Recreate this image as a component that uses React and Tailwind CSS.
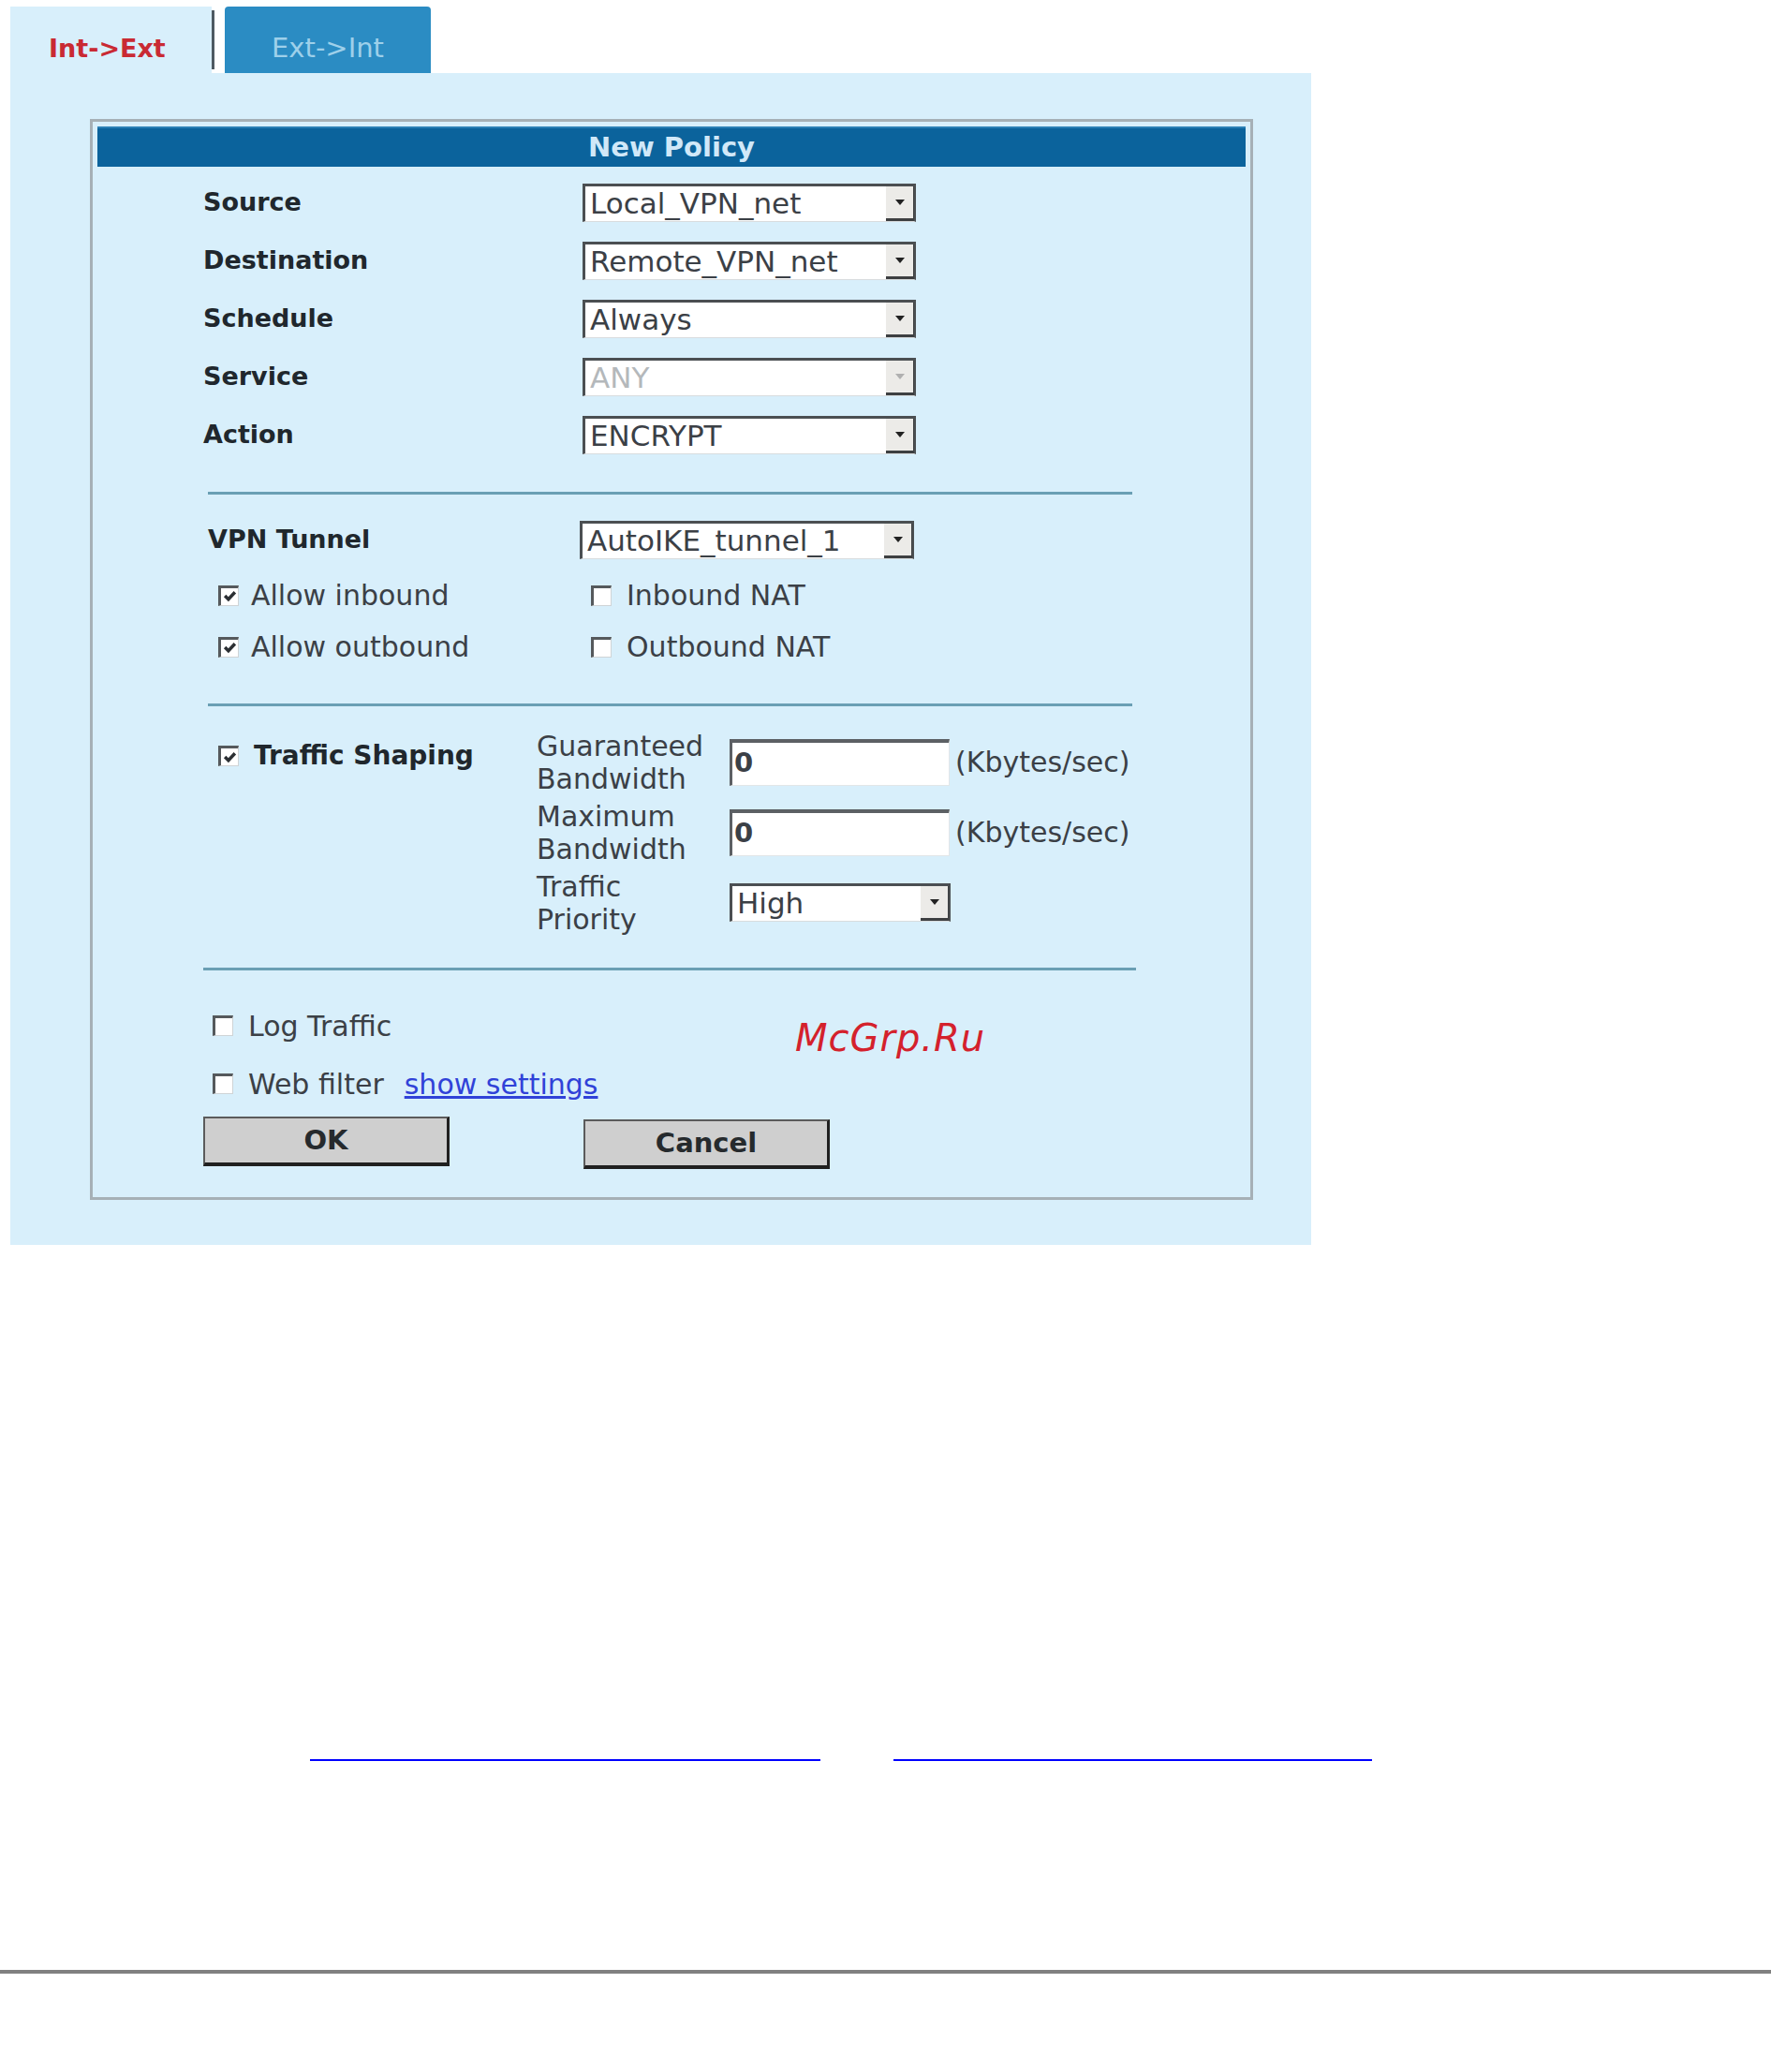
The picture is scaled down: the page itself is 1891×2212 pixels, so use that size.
import React from 'react'

const font = { fontFamily: '"DejaVu Sans", Verdana, sans-serif' }

const Check = ({ on }) => (
  <span className="inline-flex w-[22px] h-[22px] shrink-0 bg-white border-t-[3px] border-l-[3px] border-t-[#55595c] border-l-[#55595c] border-r border-b border-r-[#cfd4d6] border-b-[#cfd4d6] items-center justify-center">
    {on && (
      <svg width="15" height="15" viewBox="0 0 14 14">
        <path d="M2 6.5 L5.5 10 L12 3" fill="none" stroke="#2b2f33" strokeWidth="3.2" />
      </svg>
    )}
  </span>
)

const Dropdown = ({ value, width = 'w-[356px]', disabled }) => (
  <div className={`${width} h-[41px] flex bg-white border-t-[3px] border-l-[3px] border-r-2 border-b border-t-[#4b4f52] border-l-[#4b4f52] border-r-[#4b4f52] border-b-[#d8dcde]`}>
    <span className={`flex-1 flex items-center pl-[5px] text-[31px] leading-none ${disabled ? 'text-[#b4b8bb]' : 'text-[#3b4046]'}`}>
      {value}
    </span>
    <span className="w-[30px] flex items-center justify-center bg-[#ecebe8] border-b-[3px] border-r border-[#3d3f41]">
      <svg width="10" height="6" viewBox="0 0 10 6">
        <path d="M0 0 H10 L5 6 Z" fill={disabled ? '#b0b0b0' : '#222'} />
      </svg>
    </span>
  </div>
)

const TextBox = ({ value }) => (
  <div className="w-[235px] h-[50px] flex items-center bg-white border-t-[4px] border-l-[3px] border-t-[#5c6064] border-l-[#5c6064] border-r border-b border-r-[#e2e6e8] border-b-[#e2e6e8] pl-[2px] text-[29px] font-bold text-[#3b4046]">
    {value}
  </div>
)

const Button = ({ children, extra = '' }) => (
  <button
    type="button"
    className={`w-[263px] h-[53px] bg-[#cfcfcf] border-t-2 border-l-2 border-r-[3px] border-b-[4px] border-t-[#5b5b5b] border-l-[#5b5b5b] border-r-[#202020] border-b-[#202020] text-[29px] font-bold text-[#262a2d] leading-none ${extra}`}
  >
    {children}
  </button>
)

const Divider = ({ extra }) => <div className={`h-[3px] bg-[#6a9fb4] ${extra}`} />

const fields = [
  { label: 'Source', value: 'Local_VPN_net' },
  { label: 'Destination', value: 'Remote_VPN_net' },
  { label: 'Schedule', value: 'Always' },
  { label: 'Service', value: 'ANY', disabled: true },
  { label: 'Action', value: 'ENCRYPT' },
]

const shaping = [
  { label: ['Guaranteed', 'Bandwidth'], value: '0', unit: '(Kbytes/sec)' },
  { label: ['Maximum', 'Bandwidth'], value: '0', unit: '(Kbytes/sec)' },
  { label: ['Traffic', 'Priority'], select: 'High' },
]

export default function App() {
  return (
    <div className="bg-white min-h-[2212px] text-[#3b4046]" style={font}>
      <div className="pl-[11px] pt-[7px] w-[1400px]">
        {/* tabs */}
        <div className="flex h-[71px] items-stretch">
          <div className="w-[215px] bg-[#d8effb] flex items-center pl-[41px] pt-[19px] text-[27px] font-bold text-[#c92a33]">
            Int-&gt;Ext
          </div>
          <div className="w-[3px] my-[4px] bg-[#4e5a62]" />
          <div className="w-[11px]" />
          <div className="w-[220px] bg-[#2b8cc3] rounded-t-[4px] flex items-center justify-center pt-[19px] text-[29px] text-[#9ed0ea]">
            Ext-&gt;Int
          </div>
        </div>

        {/* tab body */}
        <div className="w-[1389px] h-[1251px] bg-[#d8effb] pt-[49px] pl-[85px]">
          <div className="relative w-[1242px] h-[1154px] border-[3px] border-[#a6b0b6] px-[5px] pt-[5px]">
            <div className="h-[43px] bg-[#0b639c] flex items-center justify-center text-[29px] font-bold text-[#d0e8f8] border-t-2 border-[#2a7fb5]">
              New Policy
            </div>

            <div className="ml-[113px] mt-[7px]">
              {fields.map((f) => (
                <div key={f.label} className="h-[62px] flex items-center">
                  <span className="w-[405px] text-[27px] font-bold text-[#20272d]">{f.label}</span>
                  <Dropdown value={f.value} disabled={f.disabled} />
                </div>
              ))}

              <Divider extra="mt-[30px] ml-[5px] w-[987px]" />

              <div className="h-[50px] mt-[23px] flex items-center">
                <span className="w-[402px] pl-[5px] text-[27px] font-bold text-[#20272d]">VPN Tunnel</span>
                <Dropdown value="AutoIKE_tunnel_1" width="w-[357px]" />
              </div>

              <div className="mt-[7px]">
                {[
                  ['Allow inbound', 'Inbound NAT'],
                  ['Allow outbound', 'Outbound NAT'],
                ].map(([a, b]) => (
                  <div key={a} className="h-[55px] flex items-center text-[30px]">
                    <div className="w-[414px] pl-[16px] flex items-center gap-[13px]">
                      <Check on />
                      <span>{a}</span>
                    </div>
                    <div className="flex items-center gap-[16px]">
                      <Check />
                      <span>{b}</span>
                    </div>
                  </div>
                ))}
              </div>

              <Divider extra="mt-[33px] ml-[5px] w-[987px]" />

              <div className="mt-[22px] flex">
                <div className="w-[356px] pl-[16px] h-[62px] flex items-center gap-[16px]">
                  <Check on />
                  <span className="text-[28px] font-bold text-[#20272d]">Traffic Shaping</span>
                </div>
                <div>
                  {shaping.map((s) => (
                    <div key={s.label[0]} className="h-[75px] flex items-center">
                      <div className="w-[206px] text-[30px] leading-[35px]">
                        <div>{s.label[0]}</div>
                        <div>{s.label[1]}</div>
                      </div>
                      {s.select ? (
                        <Dropdown value={s.select} width="w-[236px]" />
                      ) : (
                        <>
                          <TextBox value={s.value} />
                          <span className="ml-[6px] text-[30px]">{s.unit}</span>
                        </>
                      )}
                    </div>
                  ))}
                </div>
              </div>

              <Divider extra="mt-[32px] w-[996px]" />

              <div className="h-[50px] mt-[34px] pl-[10px] flex items-center gap-[16px] text-[30px]">
                <Check />
                <span>Log Traffic</span>
              </div>
              <div className="h-[50px] mt-[12px] pl-[10px] flex items-center gap-[16px] text-[30px]">
                <Check />
                <span>Web filter</span>
                <a href="#" className="ml-[6px] text-[#3042d8] underline">show settings</a>
              </div>

              <div className="mt-[10px] flex items-start">
                <Button>OK</Button>
                <Button extra="ml-[143px] mt-[3px]">Cancel</Button>
              </div>
            </div>

            {/* watermark */}
            <span className="absolute left-[750px] top-[948px] text-[40px] italic text-[#d4212c] tracking-[1px]">
              McGrp.Ru
            </span>
          </div>
        </div>
      </div>

      {/* links below the figure */}
      <div className="mt-[549px] pl-[331px] flex">
        <a href="#" className="block w-[545px] h-[2px] bg-[#0000ff]" />
        <a href="#" className="block ml-[78px] w-[511px] h-[2px] bg-[#0000ff]" />
      </div>

      <div className="mt-[223px] h-[4px] bg-[#808080]" />
    </div>
  )
}
